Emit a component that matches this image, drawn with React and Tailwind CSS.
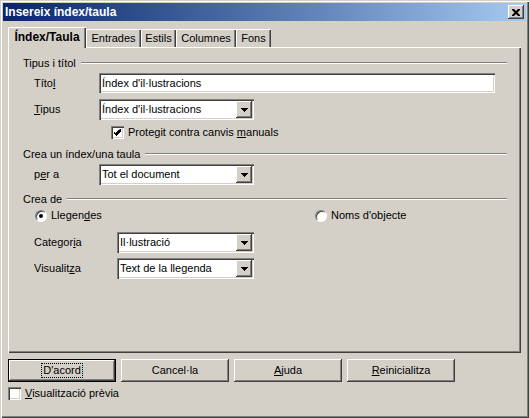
import React from 'react';

const sunken = 'shadow-[inset_1px_1px_0_#808080,inset_2px_2px_0_#404040,inset_-1px_-1px_0_#ffffff,inset_-2px_-2px_0_#d4d0c8]';
const raised = 'shadow-[inset_-1px_-1px_0_#404040,inset_1px_1px_0_#ffffff,inset_-2px_-2px_0_#808080,inset_2px_2px_0_#d4d0c8]';

const U = ({ children }) => <span className="underline underline-offset-[1px]">{children}</span>;

const Arrow = () => (
  <svg width="7" height="4" viewBox="0 0 7 4">
    <path d="M0 0h7v1h-1v1h-1v1h-1v1h-1v-1h-1v-1h-1v-1h-1z" fill="#000" />
  </svg>
);

const Select = ({ value, width }) => (
  <div className={`flex h-[21px] items-center bg-white p-[2px] ${sunken} ${width}`}>
    <span className="flex-1 truncate pl-[1px] leading-[17px]">{value}</span>
    <div className={`flex h-[17px] w-[16px] items-center justify-center bg-[#d4d0c8] ${raised}`}>
      <Arrow />
    </div>
  </div>
);

const Check = ({ checked }) => (
  <div className={`flex h-[13px] w-[13px] shrink-0 items-center justify-center bg-white ${sunken}`}>
    {checked && (
      <svg width="7" height="7" viewBox="0 0 7 7">
        <path d="M6 0h1v3h-1v1h-1v1h-1v1h-1v1h-1v-1h-1v-1h-1v-1h-1v-2h1v1h1v1h1v-1h1v-1h1v-1h1z" fill="#000" />
      </svg>
    )}
  </div>
);

const Radio = ({ checked }) => (
  <div className="flex h-[12px] w-[12px] shrink-0 items-center justify-center rounded-full border border-t-[#808080] border-l-[#808080] border-r-white border-b-white bg-white shadow-[inset_1px_1px_0_#404040]">
    {checked && <div className="h-[4px] w-[4px] rounded-full bg-black" />}
  </div>
);

const Group = ({ title }) => (
  <div className="flex h-[12px] items-center">
    <span className="leading-[12px]">{title}</span>
    <div className="ml-[5px] flex-1 border-t border-b border-t-[#808080] border-b-white" />
  </div>
);

const Tab = ({ label, w, active }) => (
  <div
    className={`flex items-center justify-center bg-[#d4d0c8] shadow-[inset_1px_1px_0_#ffffff,inset_-1px_0_0_#404040,inset_-2px_0_0_#808080] ${w} ${
      active ? 'relative z-10 mb-[-1px] h-[21px] text-[12px] font-bold' : 'h-[18px]'
    }`}
  >
    {label}
  </div>
);

const Button = ({ children, isDefault }) => (
  <div
    className={`flex h-[23px] w-[108px] items-center justify-center bg-[#d4d0c8] ${
      isDefault
        ? 'border border-black shadow-[inset_-1px_-1px_0_#404040,inset_1px_1px_0_#ffffff,inset_-2px_-2px_0_#808080]'
        : raised
    }`}
  >
    {children}
  </div>
);

export default function App() {
  return (
    <div className="h-[418px] w-[529px] bg-[#d4d0c8] p-[3px] font-['Liberation_Sans',Arial,sans-serif] text-[11px] leading-[13px] text-black shadow-[inset_1px_1px_0_#d4d0c8,inset_2px_2px_0_#ffffff,inset_-1px_-1px_0_#404040,inset_-2px_-2px_0_#808080]">
      <div className="flex h-[18px] items-center justify-between bg-gradient-to-r from-[#0a246a] to-[#a6caf0] pl-[2px] pr-[2px]">
        <span className="text-[12px] font-bold text-white">Insereix índex/taula</span>
        <div className={`flex h-[14px] w-[16px] items-center justify-center bg-[#d4d0c8] ${raised}`}>
          <svg width="8" height="7" viewBox="0 0 8 7">
            <path d="M0 0h2l2 2 2-2h2v1l-2.5 2.5L8 6v1H6L4 5 2 7H0V6l2.5-2.5L0 1z" fill="#000" />
          </svg>
        </div>
      </div>

      <div className="ml-[5px] w-[513px]">
        <div className="mt-[6px] flex h-[20px] items-end">
          <Tab label="Índex/Taula" w="w-[78px]" active />
          <Tab label="Entrades" w="w-[55px]" />
          <Tab label="Estils" w="w-[35px]" />
          <Tab label="Columnes" w="w-[60px]" />
          <Tab label="Fons" w="w-[35px]" />
        </div>

        <div className="flex h-[306px] flex-col pl-[15px] pr-[14px] shadow-[inset_1px_1px_0_#ffffff,inset_-1px_-1px_0_#404040,inset_-2px_-2px_0_#808080]">
          <div className="mt-[10px]">
            <Group title="Tipus i títol" />
          </div>
          <div className="mt-[4px] flex items-center pl-[11px]">
            <span className="w-[65px]">Títo<U>l</U></span>
            <div className={`flex h-[20px] w-[396px] items-center bg-white pl-[3px] ${sunken}`}>Índex d'il·lustracions</div>
          </div>
          <div className="mt-[6px] flex items-center pl-[11px]">
            <span className="w-[65px]"><U>T</U>ipus</span>
            <Select value="Índex d'il·lustracions" width="w-[155px]" />
          </div>
          <div className="mt-[6px] flex h-[13px] items-center gap-[4px] pl-[88px]">
            <Check checked />
            <span>Protegit contra canvis <U>m</U>anuals</span>
          </div>

          <div className="mt-[9px]">
            <Group title="Crea un índex/una taula" />
          </div>
          <div className="mt-[4px] flex items-center pl-[11px]">
            <span className="w-[65px]">p<U>e</U>r a</span>
            <Select value="Tot el document" width="w-[155px]" />
          </div>

          <div className="mt-[8px]">
            <Group title="Crea de" />
          </div>
          <div className="mt-[4px] flex h-[13px] items-center pl-[12px]">
            <div className="flex w-[280px] items-center gap-[4px]">
              <Radio checked />
              <span>Llegen<U>d</U>es</span>
            </div>
            <div className="flex items-center gap-[4px]">
              <Radio />
              <span>Noms d'ob<U>j</U>ecte</span>
            </div>
          </div>
          <div className="mt-[10px] flex items-center pl-[11px]">
            <span className="w-[83px]">Categor<U>i</U>a</span>
            <Select value="Il·lustració" width="w-[137px]" />
          </div>
          <div className="mt-[5px] flex items-center pl-[11px]">
            <span className="w-[83px]">Visualit<U>z</U>a</span>
            <Select value="Text de la llegenda" width="w-[137px]" />
          </div>
        </div>

        <div className="mt-[6px] flex gap-[5px]">
          <Button isDefault>
            <span className="border border-dotted border-black px-[1px] leading-[13px]">D'acord</span>
          </Button>
          <Button>Cancel·la</Button>
          <Button><span><U>A</U>juda</span></Button>
          <Button><span><U>R</U>einicialitza</span></Button>
        </div>
        <div className="mt-[5px] flex h-[13px] items-center gap-[4px]">
          <Check />
          <span><U>V</U>isualització prèvia</span>
        </div>
      </div>
    </div>
  );
}
